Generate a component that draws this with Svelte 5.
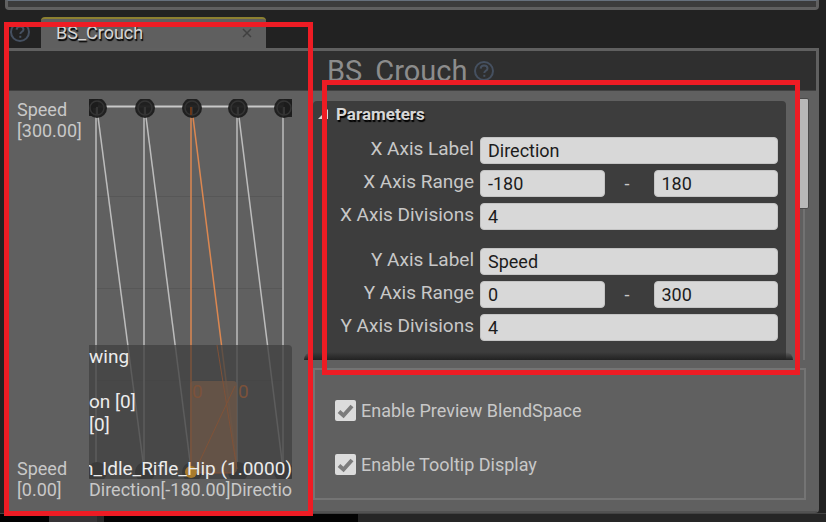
<script>
  const columns = [7, 55, 102, 148, 194];
  const activeColumn = 2;

  const axes = $state([
    { name: 'X', label: 'Direction', min: '-180', max: '180', divisions: '4' },
    { name: 'Y', label: 'Speed', min: '0', max: '300', divisions: '4' }
  ]);

  const options = $state([
    { id: 'preview', text: 'Enable Preview BlendSpace', on: true },
    { id: 'tooltip', text: 'Enable Tooltip Display', on: true }
  ]);
</script>

{#snippet help()}
  <svg class="help" viewBox="0 0 22 22" aria-hidden="true">
    <circle cx="11" cy="11" r="9" />
    <path d="M7.6 8.7C7.8 6.6 9.2 5.6 11.1 5.6c2 0 3.4 1.1 3.4 2.8 0 2.3-3.2 2.5-3.2 4.6" />
    <path d="M11.3 14.8v2" />
  </svg>
{/snippet}

<div class="app">
  <div class="upper"></div>

  <div class="tabs">
    {@render help()}
    <div class="tab">
      <span>BS_Crouch</span>
      <button aria-label="Close tab">
        <svg viewBox="0 0 10 10" aria-hidden="true"><path d="M1 1l8 8M9 1L1 9" /></svg>
      </button>
    </div>
  </div>

  <main class="panel">
    <header>
      <h1>BS_Crouch</h1>
      {@render help()}
    </header>

    <div class="body">
      <section class="graph">
        <div class="yaxis">
          <div>Speed<br />[300.00]</div>
          <div>Speed<br />[0.00]</div>
        </div>
        <div class="plot">
          <div class="canvas">
            <svg viewBox="0 0 203 380" aria-hidden="true">
              {#each [97, 189, 281] as y}
                <path class="grid" d="M7 {y}.5H194" />
              {/each}
              <path class="edge top" d="M7 7.5H194" />
              {#each columns as x, i}
                <path class="edge" class:active={i === activeColumn} d="M{x} 8V372" />
                {#if i < columns.length - 1}
                  <path class="edge" class:active={i === activeColumn} d="M{x + 1} 10L{columns[i + 1]} 370" />
                {/if}
              {/each}
              <path class="node" d="M0 0H9V9H0zM195 0h8V18h-8zM0 9H4V17H0z" />
              {#each columns as x}
                <circle class="node" cx={x + 1} cy="9" r="10" />
                <circle class="ring" cx={x + 1} cy="9" r="7" />
                <path class="inner" d="M{x + 1} 8V16" />
                <circle class="node" cx={x + 1} cy="373" r="10" />
              {/each}
              <path class="ember" d="M102 8V16" />
            </svg>
            <div class="info">
              <svg viewBox="0 0 203 134" aria-hidden="true">
                <rect x="101" y="36" width="47" height="92" rx="4" />
                <path d="M107 124L146 41M102 0V128H146M128 0L148 124" />
                <circle cx="102" cy="127" r="6" />
              </svg>
              <span class="sample first">0</span>
              <span class="sample second">0</span>
              <p>wing</p>
              <p class="gap">on [0]</p>
              <p>[0]</p>
              <p class="asset">n_Idle_Rifle_Hip (1.0000)</p>
            </div>
          </div>
          <div class="xaxis"><span>Direction[-180.00]</span><span>Direction</span></div>
        </div>
      </section>

      <section class="side">
        <div class="scroller">
          <div class="clip">
            <div class="card">
              <h2>
                <svg viewBox="0 0 10 10" aria-hidden="true"><path d="M10 0v10H0z" /></svg>
                Parameters
              </h2>
              {#each axes as axis}
                <div class="axis">
                  <div class="row">
                    <label for="{axis.name}-label">{axis.name} Axis Label</label>
                    <input id="{axis.name}-label" type="text" bind:value={axis.label} />
                  </div>
                  <div class="row">
                    <label for="{axis.name}-min">{axis.name} Axis Range</label>
                    <div class="range">
                      <input id="{axis.name}-min" type="text" bind:value={axis.min} />
                      <span>-</span>
                      <input type="text" aria-label="{axis.name} Axis maximum" bind:value={axis.max} />
                    </div>
                  </div>
                  <div class="row">
                    <label for="{axis.name}-div">{axis.name} Axis Divisions</label>
                    <input id="{axis.name}-div" type="text" bind:value={axis.divisions} />
                  </div>
                </div>
              {/each}
            </div>
          </div>
          <div class="bar"><div class="thumb"></div></div>
        </div>

        <div class="options">
          {#each options as option}
            <label for={option.id}>
              <input id={option.id} type="checkbox" bind:checked={option.on} />
              <svg viewBox="0 0 21 21" aria-hidden="true"><path d="M4 11.5l4.5 4L17 6" /></svg>
              <span>{option.text}</span>
            </label>
          {/each}
        </div>
      </section>
    </div>
  </main>

  <footer><i class="a"></i><i class="b"></i><i class="c"></i><i class="d"></i><i class="e"></i></footer>

  <div class="mark mark-graph"></div>
  <div class="mark mark-params"></div>
</div>

<style>
  :global(body) { background: #222; }
  .app, .app * { box-sizing: border-box; }
  .app {
    position: relative;
    background: #222;
    color: #c8c8c8;
    font: 18px/21px Roboto, "Liberation Sans", sans-serif;
    overflow: hidden;
  }
  h1, h2, p { margin: 0; font-weight: 400; }
  svg { display: block; }
  .upper {
    height: 10px;
    margin: 0 7px 0 5px;
    background: #3c3c3c;
    border: 3px solid #606060;
    border-top: 1px solid #66707c;
    border-radius: 0 0 4px 4px;
  }
  .tabs { display: flex; height: 38px; padding: 7px 0 0 9px; }
  .help {
    flex: none;
    width: 22px;
    height: 22px;
    fill: none;
    stroke: #455060;
    stroke-width: 2;
  }
  .tabs .help { margin-top: 4px; }
  .tab {
    display: flex;
    align-items: center;
    justify-content: space-between;
    width: 225px;
    margin-left: 10px;
    padding: 0 14px 2px 15px;
    background: #5f5f5f;
    border-top: 2px solid #8c8030;
    border-radius: 4px 4px 0 0;
    color: #d5d5d5;
    text-shadow: 1px 2px 1px #000;
  }
  .tab button { padding: 0; border: 0; background: none; }
  .tab button svg { width: 10px; height: 10px; stroke: #404040; stroke-width: 1.5; }
  .panel {
    margin: 0 7px 0 5px;
    background: #606060;
    border: 3px solid #606060;
    border-bottom: 2px solid #525252;
    border-radius: 0 0 4px 4px;
  }
  header {
    display: flex;
    align-items: center;
    height: 40px;
    padding-left: 319px;
    background: #2f2f2f;
    border-bottom: 1px solid #414141;
  }
  h1 { font-size: 29px; line-height: 36px; color: #8c8c8c; }
  header .help { margin-left: 6px; }
  .body { display: flex; }
  .graph { display: flex; flex: none; width: 296px; padding: 8px 12px 0 9px; }
  .yaxis {
    display: flex;
    flex-direction: column;
    justify-content: space-between;
    flex: none;
    width: 72px;
    padding-bottom: 11px;
  }
  .plot { flex: 1; min-width: 0; }
  .canvas { position: relative; overflow: hidden; }
  .canvas > svg { width: 203px; height: 380px; fill: none; }
  .grid { stroke: #575757; }
  .edge { stroke: #bdbdbd; stroke-width: 1.5; }
  .edge.top { stroke: #c8c8c8; stroke-width: 2; }
  .edge.active { stroke: #dc8750; }
  .node { fill: #1c1c1c; fill-opacity: .95; }
  .ring { stroke: #343434; stroke-width: 1.5; }
  .inner { stroke: #343434; stroke-width: 2; }
  .ember { stroke: #693719; stroke-width: 2; }
  .info {
    position: absolute;
    inset: auto 0 0 0;
    height: 134px;
    background: rgba(65, 65, 65, .78);
    border-radius: 0 4px 0 0;
    color: #ececec;
    font-size: 19px;
    overflow: hidden;
    white-space: nowrap;
  }
  .info svg { position: absolute; inset: 0; width: 203px; height: 134px; }
  .info rect { fill: #6b5647; fill-opacity: .8; }
  .info path { fill: none; stroke: #805238; }
  .info circle { fill: #a87b2c; }
  .info p { position: relative; line-height: 23px; }
  .info .gap { margin-top: 22px; }
  .info .asset { display: flex; justify-content: flex-end; margin-top: 21px; }
  .sample { position: absolute; top: 36px; color: #7c523a; }
  .sample.first { left: 103px; }
  .sample.second { left: 149px; }
  .xaxis { display: flex; width: 203px; overflow: hidden; }
  .side { flex: 1; min-width: 0; padding-bottom: 11px; }
  .scroller { display: flex; padding: 7px 7px 0 0; }
  .clip { flex: 1; padding: 3px 7px 0 9px; position: relative; }
  .clip::after {
    content: "";
    position: absolute;
    inset: auto 0 0 0;
    height: 8px;
    background: linear-gradient(transparent, #222);
    border-radius: 8px 8px 0 0;
  }
  .card {
    padding: 4px 8px 19px 0;
    background: #3d3d3d;
    border-radius: 4px 4px 0 0;
  }
  h2 {
    display: flex;
    align-items: center;
    gap: 8px;
    padding-left: 5px;
    font-size: 17px;
    font-weight: 700;
    line-height: 18px;
    color: #d8d8d8;
    text-shadow: 1px 2px 1px #000;
  }
  h2 svg { width: 10px; height: 10px; fill: #d8d8d8; }
  .axis { display: flex; flex-direction: column; gap: 6px; margin-top: 12px; }
  h2 + .axis { margin-top: 14px; }
  .axis + .axis { margin-top: 18px; }
  .row { display: grid; grid-template-columns: 161px minmax(0, 1fr); column-gap: 6px; }
  .row label { font-size: 19px; line-height: 24px; text-align: right; }
  .row input {
    width: 100%;
    min-width: 0;
    height: 27px;
    padding: 0 7px;
    background: #d8d8d8;
    border: 1px solid #c4c4c4;
    border-radius: 4px;
    color: #1c1c1c;
    font: inherit;
  }
  .range { display: flex; align-items: center; }
  .range input { flex: 1; }
  .range span { flex: none; width: 49px; padding-right: 4px; text-align: center; }
  .bar {
    flex: none;
    width: 14px;
    margin-left: 2px;
    background: linear-gradient(#727272, #727272) 8px 0 / 2px 100% no-repeat;
  }
  .thumb {
    height: 111px;
    background: #b8b8b8;
    border: 1px solid #4a4a4a;
    border-radius: 2px;
  }
  .options {
    display: flex;
    flex-direction: column;
    gap: 33px;
    margin: 8px 10px 0 9px;
    padding: 30px 20px 23px 20px;
    border: 2px solid #747474;
  }
  .options label { position: relative; display: flex; align-items: center; gap: 5px; }
  .options input {
    appearance: none;
    width: 21px;
    height: 21px;
    margin: 0;
    background: #dcdcdc;
    border-radius: 2px;
  }
  .options svg {
    position: absolute;
    left: 0;
    top: 0;
    width: 21px;
    height: 21px;
    fill: none;
    stroke: #7c7c7c;
    stroke-width: 4;
    pointer-events: none;
    visibility: hidden;
  }
  .options input:checked + svg { visibility: visible; }
  footer { display: flex; height: 9px; border-top: 1px solid #444; }
  .a { width: 49px; background: #020202; }
  .b { width: 48px; background: #363436; }
  .c { width: 7px; background: #292929; }
  .d { width: 254px; background: #040404; }
  .e { flex: 1; background: #262626; }
  .mark { position: absolute; border: 5px solid #ee1c24; pointer-events: none; }
  .mark-graph { left: 4px; top: 22px; bottom: 6px; width: 309px; }
  .mark-params { left: 322px; right: 26px; top: 80px; height: 295px; }
</style>
